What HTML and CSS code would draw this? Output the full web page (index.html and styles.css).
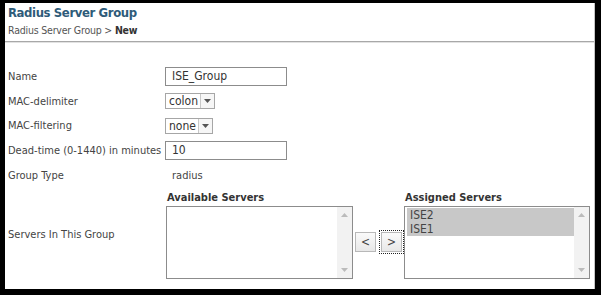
FILE: index.html
```html
<!DOCTYPE html>
<html lang="en">
<head>
    <meta charset="UTF-8">
    <title>Radius Server Group</title>
    <link rel="stylesheet" href="styles.css">
</head>
<body>
<div class="frame">
    <div class="header">
        <h1>Radius Server Group</h1>
        <div class="crumb">Radius Server Group &gt; <b>New</b></div>
    </div>

    <div class="form">
        <div class="label">Name</div>
        <div class="field"><div class="textbox">ISE_Group</div></div>

        <div class="label">MAC-delimiter</div>
        <div class="field">
            <div class="dropdown">
                <span class="value">colon</span>
                <span class="arrow"><svg width="7" height="4" viewBox="0 0 7 4"><path d="M0 0h7L3.5 4z" fill="#555"/></svg></span>
            </div>
        </div>

        <div class="label">MAC-filtering</div>
        <div class="field">
            <div class="dropdown">
                <span class="value">none</span>
                <span class="arrow"><svg width="7" height="4" viewBox="0 0 7 4"><path d="M0 0h7L3.5 4z" fill="#555"/></svg></span>
            </div>
        </div>

        <div class="label">Dead-time (0-1440) in minutes</div>
        <div class="field"><div class="textbox">10</div></div>

        <div class="label">Group Type</div>
        <div class="field"><span class="plain">radius</span></div>

        <div class="label servers-label">Servers In This Group</div>
        <div class="servers">
            <div class="server-col available">
                <div class="col-title">Available Servers</div>
                <div class="listbox">
                    <div class="items"></div>
                    <div class="scroll">
                        <svg width="7" height="4" viewBox="0 0 7 4"><path d="M0 4h7L3.5 0z" fill="#bbb"/></svg>
                        <svg width="7" height="4" viewBox="0 0 7 4"><path d="M0 0h7L3.5 4z" fill="#bbb"/></svg>
                    </div>
                </div>
            </div>

            <div class="movers">
                <button type="button" class="move">&lt;</button>
                <button type="button" class="move focused">&gt;</button>
            </div>

            <div class="server-col assigned">
                <div class="col-title">Assigned Servers</div>
                <div class="listbox">
                    <div class="items">
                        <div class="item selected">ISE2</div>
                        <div class="item selected">ISE1</div>
                    </div>
                    <div class="scroll">
                        <svg width="7" height="4" viewBox="0 0 7 4"><path d="M0 4h7L3.5 0z" fill="#bbb"/></svg>
                        <svg width="7" height="4" viewBox="0 0 7 4"><path d="M0 0h7L3.5 4z" fill="#bbb"/></svg>
                    </div>
                </div>
            </div>
        </div>
    </div>
</div>
</body>
</html>
```

FILE: styles.css
```css
body {
    margin: 0;
    background: #000;
    font-family: 'DejaVu Sans Condensed', 'DejaVu Sans', sans-serif;
    font-size: 11px;
    color: #444;
}

.frame {
    margin: 3px 6px 0 5px;
    height: 286px;
    background: #fff;
    border-right: 1px solid #c4c4c4;
    box-sizing: border-box;
}

.header {
    padding: 2px 0 4px 3px;
    border-bottom: 1px solid #a8a8a8;
    box-shadow: 0 1px 0 #e2e2e2;
}

h1 {
    margin: 0;
    font-size: 13px;
    line-height: 16px;
    font-weight: 700;
    letter-spacing: -0.4px;
    color: #2e5b79;
}

.crumb {
    margin-top: 2px;
    line-height: 14px;
    font-size: 10.5px;
    letter-spacing: -0.2px;
    color: #555;
}

.crumb b {
    color: #333;
}

.form {
    display: grid;
    grid-template-columns: 157px 1fr;
    grid-auto-rows: 24.75px;
    margin-top: 22px;
    padding-left: 3px;
    align-items: center;
}

.label {
    white-space: nowrap;
}

.textbox {
    width: 122px;
    height: 19px;
    border: 1px solid #8c8c8c;
    box-sizing: border-box;
    padding-left: 6px;
    font-size: 12px;
    line-height: 17px;
    color: #333;
}

.dropdown {
    display: inline-flex;
    height: 16px;
    border: 1px solid #a6a6a6;
    box-sizing: border-box;
    font-size: 12px;
    line-height: 14px;
    color: #333;
}

.dropdown .value {
    padding: 0 2px 0 3px;
}

.dropdown .arrow {
    width: 13px;
    border-left: 1px solid #c8c8c8;
    display: flex;
    align-items: center;
    justify-content: center;
    background: #f6f6f6;
}

.plain {
    padding-left: 7px;
}

.servers-label,
.servers {
    grid-row: span 4;
    align-self: start;
}

.servers-label {
    margin-top: 40px;
}

.servers {
    display: flex;
    margin-top: 3px;
}

.server-col {
    display: flex;
    flex-direction: column;
}

.available {
    margin-left: 1px;
}

.col-title {
    font-weight: 700;
    font-size: 11px;
    line-height: 14px;
    padding-left: 1px;
    margin-bottom: 1px;
    color: #333;
}

.listbox {
    display: flex;
    height: 73px;
    border: 1px solid #8c8c8c;
    box-sizing: border-box;
}

.available .listbox {
    width: 187px;
}

.assigned .listbox {
    width: 186px;
}

.items {
    flex: 1;
    padding: 1px 0 0 2px;
}

.item {
    height: 14px;
    line-height: 14px;
    padding-left: 3px;
    font-size: 12px;
    color: #444;
}

.item.selected {
    background: #c8c8c8;
}

.scroll {
    width: 15px;
    background: #f2f2f2;
    display: flex;
    flex-direction: column;
    justify-content: space-between;
    align-items: center;
    padding: 6px 0;
}

.movers {
    display: flex;
    align-items: center;
    gap: 5px;
    padding-top: 15px;
    margin: 0 2px;
}

.move {
    width: 21px;
    height: 20px;
    padding: 0;
    border: 1px solid #b8b8b8;
    background: linear-gradient(#fafafa, #e8e8e8);
    font-family: inherit;
    font-size: 12px;
    color: #444;
}

.move.focused {
    outline: 1px dotted #222;
    outline-offset: 1px;
}
```
